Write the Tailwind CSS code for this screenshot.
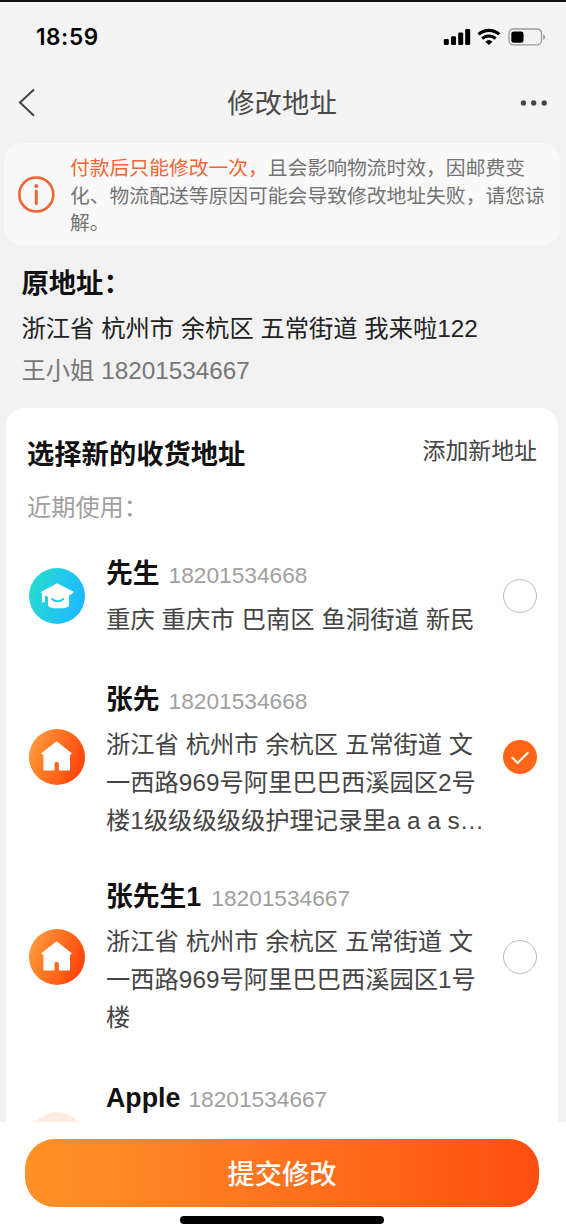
<!DOCTYPE html>
<html lang="zh-CN">
<head>
<meta charset="utf-8">
<title>修改地址</title>
<script src="https://cdn.jsdelivr.net/npm/@tailwindcss/browser@4"></script>
</head>
<body class="w-[566px] h-[1232px] overflow-hidden bg-[#f2f2f2] font-['Liberation_Sans','Noto_Sans_CJK_SC',sans-serif] text-[#111]">
<svg class="absolute w-0 h-0">
  <defs>
    <linearGradient id="warm" x1="0" y1="0.3" x2="1" y2="0.7"><stop offset="0" stop-color="#ff9a3a"/><stop offset="1" stop-color="#ff4208"/></linearGradient>
    <linearGradient id="cool" x1="0" y1="0.3" x2="1" y2="0.6"><stop offset="0" stop-color="#26dcd0"/><stop offset="1" stop-color="#1fb8ff"/></linearGradient>
    <symbol id="home" viewBox="0 0 56 56">
      <circle cx="28" cy="28" r="28" fill="url(#warm)"/>
      <path d="M27.600 13.500L41.600 24.600H40V40.500H30.900V35a3.200 3.200 0 0 0-6.400 0V40.500H15.400V24.600H13.500z" fill="#fff" stroke="#fff" stroke-width="2" stroke-linejoin="round"/>
    </symbol>
  </defs>
</svg>
<div class="flex flex-col h-full">
  <header class="border-t-2 border-[#111] bg-[#f4f4f4] h-[137px] shrink-0">
    <div class="flex items-center justify-between h-[70px] pl-[36px] pr-[20px]">
      <span class="font-['Inter'] font-semibold text-[22.500px] leading-[28px] tracking-[0.600px] text-black">18:59</span>
      <svg class="w-[104px] h-[20px]" viewBox="0 0 104 20">
        <g fill="#000">
          <rect x="1.800" y="12" width="5" height="6" rx="1.300"/><rect x="9" y="9.200" width="5" height="8.800" rx="1.300"/><rect x="16.200" y="5.600" width="5" height="12.400" rx="1.300"/><rect x="23.200" y="2" width="5" height="16" rx="1.300"/>
          <path d="M46.900 18l-3.600-3.300a5.400 5.400 0 0 1 7.200 0z"/>
        </g>
        <g fill="none" stroke="#000" stroke-width="3.200"><path d="M36.600 7.400a15 15 0 0 1 20.600 0"/><path d="M40.200 11.700a9.700 9.700 0 0 1 13.400 0"/></g>
        <rect x="67" y="2" width="32.500" height="15.800" rx="4.200" fill="none" stroke="#999" stroke-width="1.300"/>
        <rect x="69.300" y="4.400" width="12.200" height="11.400" rx="2.400"/>
        <path d="M101.200 7.200q2 .9 2 2.800t-2 2.800z" fill="#999"/>
      </svg>
    </div>
    <div class="relative flex items-center justify-between h-[62px] pl-[18px] pr-[18px]">
      <svg class="w-[18px] h-[30px]" viewBox="0 0 18 30" fill="none" stroke="#444" stroke-width="2"><path d="M16 1.500L2 14.500l14 13.200"/></svg>
      <h1 class="absolute left-0 right-[2px] top-[12px] text-center text-[27.400px] leading-[40px] text-[#4a4a4a]">修改地址</h1>
      <svg class="w-[28px] h-[8px]" viewBox="0 0 28 8" fill="#484848"><circle cx="3.500" cy="4" r="2.700"/><circle cx="13.700" cy="4" r="2.700"/><circle cx="24.200" cy="4" r="2.700"/></svg>
    </div>
  </header>

  <section class="flex items-center mt-[6px] ml-[4px] mr-[6px] h-[102px] shrink-0 rounded-[18px] bg-[#f9f9f9] pl-[14px]">
    <svg class="w-[37px] h-[37px] shrink-0" viewBox="0 0 37 37"><circle cx="18.300" cy="18.500" r="17" fill="none" stroke="#f26533" stroke-width="2.600"/><circle cx="18.300" cy="10" r="2" fill="#f26533"/><path d="M18.300 15v12.500" stroke="#f26533" stroke-width="3" stroke-linecap="round"/></svg>
    <p class="ml-[15px] pt-[5px] whitespace-nowrap text-[19.800px] leading-[27.500px] text-[#737373]"><span class="text-[#f26533]">付款后只能修改一次，</span>且会影响物流时效，因邮费变<br>化、物流配送等原因可能会导致修改地址失败，请您谅<br>解。</p>
  </section>

  <section class="pl-[21.500px] pt-[19px] h-[163px] shrink-0 whitespace-nowrap">
    <h2 class="font-bold text-[27.300px] leading-[40px]">原地址：</h2>
    <p class="mt-[5px] text-[24.300px] leading-[40px] text-[#222]">浙江省 杭州市 余杭区 五常街道 我来啦122</p>
    <p class="mt-[2px] text-[24.300px] leading-[40px] text-[#777]">王小姐 18201534667</p>
  </section>

  <main class="mx-[6px] mr-[8px] h-[714px] shrink-0 overflow-hidden rounded-t-[18px] bg-white pl-[21px] pr-[21px] whitespace-nowrap">
    <div class="flex justify-between pt-[26px]">
      <h2 class="pt-[1px] font-bold text-[27.300px] leading-[40px]">选择新的收货地址</h2>
      <a class="text-[22.900px] leading-[34px] text-[#444]">添加新地址</a>
    </div>
    <p class="mt-[13px] text-[24.200px] leading-[40px] text-[#a0a0a0]">近期使用：</p>
    <ul>
      <li class="flex items-center mt-[26px] h-[84px]">
        <svg class="w-[56px] h-[56px] ml-[2.400px] shrink-0" viewBox="0 0 56 56"><circle cx="28" cy="28" r="28" fill="url(#cool)"/><path d="M28.300 16.300L43.700 24.200 39.200 27V37.200c0 1.500-4 2.200-9.700 2.200S19.900 38.700 19.900 37.200V28.300L15 26V33.600H13.900V25.600L13 24.200z" fill="#fff" stroke="#fff" stroke-width="1.800" stroke-linejoin="round"/><path d="M23 31q5.600 4.600 11.400 0" fill="none" stroke="#22c9e8" stroke-width="1.800" stroke-linecap="round"/></svg>
        <div class="ml-[20.600px] flex-1 min-w-0">
          <div class="pt-px leading-[38px]"><b class="text-[26.800px]">先生</b><span class="ml-[9px] text-[22.700px] text-[#a0a0a0]">18201534668</span></div>
          <p class="mt-[4px] text-[24.400px] leading-[38px] text-[#444]">重庆 重庆市 巴南区 鱼洞街道 新民</p>
        </div>
        <i class="size-[34px] rounded-full border-[1.500px] border-[#bbb]"></i>
      </li>
      <li class="flex items-center mt-[42px] h-[159px]">
        <svg class="w-[56px] h-[56px] ml-[2.400px] mb-[6px] shrink-0"><use href="#home"/></svg>
        <div class="ml-[20.600px] flex-1 min-w-0">
          <div class="pt-[2px] leading-[38px]"><b class="text-[26.800px]">张先</b><span class="ml-[9px] text-[22.700px] text-[#a0a0a0]">18201534668</span></div>
          <p class="mt-[3px] text-[24.300px] leading-[38px] text-[#444]">浙江省 杭州市 余杭区 五常街道 文<br>一西路969号阿里巴巴西溪园区2号<br>楼1级级级级级护理记录里a a a s…</p>
        </div>
        <svg class="size-[34px] mb-[6px]" viewBox="0 0 34 34"><circle cx="17" cy="17" r="17" fill="#ff6518"/><path d="M9.500 17.800l5.100 5.300L24.600 13" fill="none" stroke="#fff1df" stroke-width="2.200" stroke-linecap="round" stroke-linejoin="round"/></svg>
      </li>
      <li class="flex items-center mt-[38px] h-[159px]">
        <svg class="w-[56px] h-[56px] ml-[2.400px] shrink-0"><use href="#home"/></svg>
        <div class="ml-[20.600px] flex-1 min-w-0">
          <div class="pt-[2px] leading-[38px]"><b class="text-[26.800px]">张先生1</b><span class="ml-[10px] text-[22.700px] text-[#a0a0a0]">18201534667</span></div>
          <p class="mt-[3px] text-[24.300px] leading-[38px] text-[#444]">浙江省 杭州市 余杭区 五常街道 文<br>一西路969号阿里巴巴西溪园区1号<br>楼</p>
        </div>
        <i class="size-[34px] rounded-full border-[1.500px] border-[#bbb]"></i>
      </li>
      <li class="flex mt-[43px]">
        <i class="size-[56px] ml-[2px] mt-[33px] shrink-0 rounded-full bg-[#ffebe4]"></i>
        <div class="ml-[21px] leading-[38px]"><b class="text-[26.800px]">Apple</b><span class="ml-[8px] text-[22.700px] text-[#a0a0a0]">18201534667</span></div>
      </li>
    </ul>
  </main>

  <footer class="flex flex-col items-center bg-white h-[110px] shrink-0 pt-[17px] pr-[2px]">
    <button class="w-[514px] h-[68px] rounded-[30px] bg-linear-to-r from-[#ff9228] to-[#ff4d10] font-medium text-[27.200px] leading-[66px] text-white pt-[3px]">提交修改</button>
    <div class="mt-[9px] w-[204px] h-[8px] rounded-full bg-black"></div>
  </footer>
</div>
</body>
</html>
